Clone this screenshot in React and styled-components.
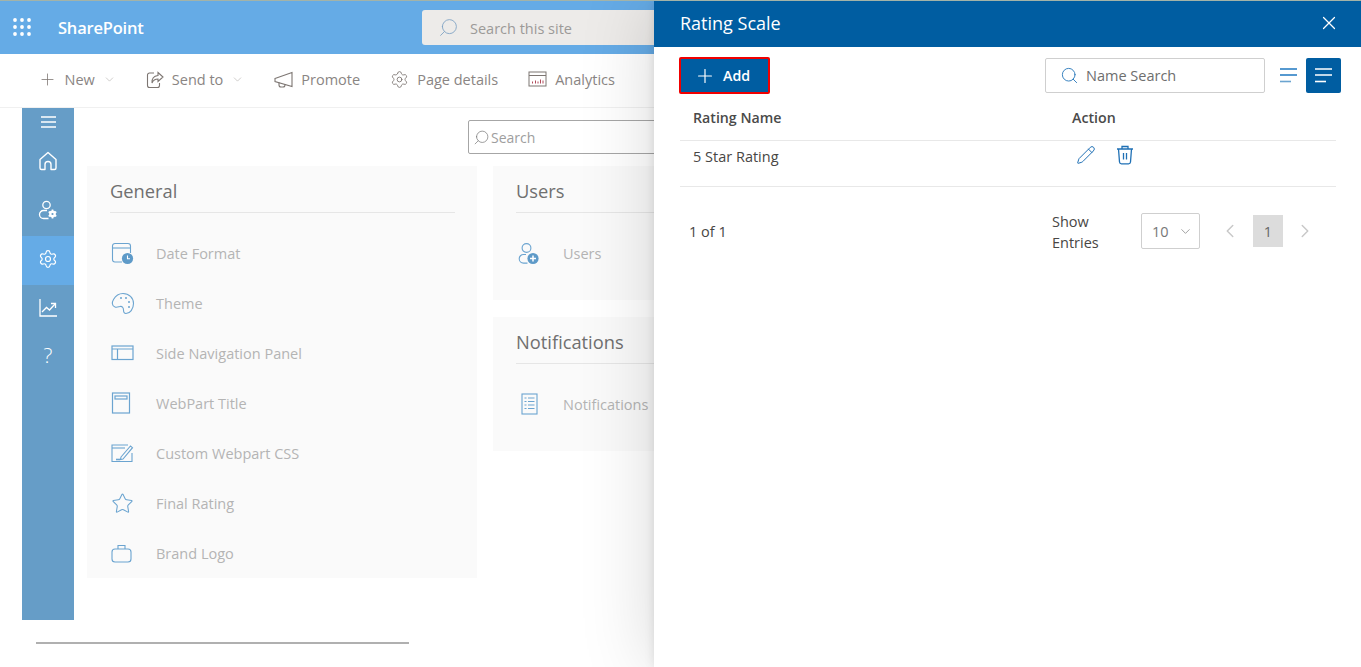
import React from "react";
import styled, { createGlobalStyle } from "styled-components";
import { Plus, ChevronDown, ChevronLeft, ChevronRight, Settings, Search, X, Pencil, Star } from "lucide-react";

const GlobalStyle = createGlobalStyle`
  html, body { margin: 0; padding: 0; }
  body { font-family: "Open Sans", "Noto Sans", "Liberation Sans", sans-serif; background: #fff; }
  * { box-sizing: border-box; }
`;

const commands = [
  { label: "New", icon: <Plus size={19} strokeWidth={1} />, caret: true },
  { label: "Send to", icon: <SendIcon />, caret: true },
  { label: "Promote", icon: <PromoteIcon /> },
  { label: "Page details", icon: <Settings size={19} strokeWidth={1.1} /> },
  { label: "Analytics", icon: <AnalyticsIcon /> },
];

const generalItems = [
  { label: "Date Format", icon: <DateIcon /> },
  { label: "Theme", icon: <PaletteIcon /> },
  { label: "Side Navigation Panel", icon: <SideNavIcon /> },
  { label: "WebPart Title", icon: <TitleIcon /> },
  { label: "Custom Webpart CSS", icon: <CssIcon /> },
  { label: "Final Rating", icon: <Star size={23} strokeWidth={1.1} /> },
  { label: "Brand Logo", icon: <CaseIcon /> },
];

function WaffleIcon() {
  const dots = [];
  for (let y = 0; y < 3; y++) {
    for (let x = 0; x < 3; x++) {
      dots.push(<circle key={x + "-" + y} cx={2 + x * 7} cy={2 + y * 7} r="1.9" fill="#fff" />);
    }
  }
  return <svg width="20" height="20" viewBox="0 0 20 20">{dots}</svg>;
}

function SendIcon() {
  return (
    <svg width="18" height="18" viewBox="0 0 18 18" fill="none" stroke="#7d7672" strokeWidth="1.1">
      <path d="M8 2H3.500A2 2 0 0 0 1.500 4v10.500a2 2 0 0 0 2 2h8a2 2 0 0 0 2-2V12" />
      <path d="M12 1.500l5 4.500-5 4.500V8C9 8 7 9.500 6 12c-.3-4 2-7 6-7.500z" />
    </svg>
  );
}

function PromoteIcon() {
  return (
    <svg width="19" height="18" viewBox="0 0 19 18" fill="none" stroke="#7d7672" strokeWidth="1.1">
      <path d="M1 7.500L18 1.500v14L1 10.500z" />
      <path d="M5 11.500v2.500a2 2 0 0 0 2 2h2a2 2 0 0 0 2-2v-.8" />
    </svg>
  );
}

function AnalyticsIcon() {
  return (
    <svg width="19" height="17" viewBox="0 0 19 17" fill="none" stroke="#7d7672">
      <rect x="1" y="1" width="17" height="14" />
      <path d="M1 4.500h17" />
      <path d="M4.500 12.500v-2M7.500 12.500v-3M10 12.500v-2M12.500 12.500v-4M15 12.500v-3" stroke="#b04a5a" />
    </svg>
  );
}

function HomeIcon() {
  return (
    <svg width="20" height="20" viewBox="0 0 20 20" fill="none" stroke="#fff" strokeWidth="1.4" strokeLinejoin="round">
      <path d="M2 8.500L10 1.500l8 7v8.500a1.500 1.500 0 0 1-1.500 1.500H13v-5a3 3 0 0 0-6 0v5H3.500A1.500 1.500 0 0 1 2 17z" />
    </svg>
  );
}

function ChartIcon() {
  return (
    <svg width="18" height="18" viewBox="0 0 18 18" fill="none" stroke="#fff" strokeWidth="1.3">
      <path d="M1 0v17h17" />
      <path d="M3 13l4.500-4.500 3 2.500L16 5" />
      <path d="M12 4.500h4.500V9" />
    </svg>
  );
}

function UserGearIcon() {
  return (
    <svg width="20" height="20" viewBox="0 0 20 20" fill="none" stroke="#fff" strokeWidth="1.3">
      <circle cx="8.500" cy="5" r="3.700" />
      <path d="M9 10.500H5.500a3.600 3.600 0 0 0 0 8h5" />
      <circle cx="14.500" cy="14" r="3.400" fill="#fff" stroke="none" />
      <path d="M14.500 9.600v8.800M10.700 11.800l7.600 4.400M18.300 11.800l-7.600 4.400" strokeWidth="1.700" />
      <circle cx="14.500" cy="14" r="1.100" fill="#669dc7" stroke="none" />
    </svg>
  );
}

function UserPlusIcon() {
  return (
    <svg width="23" height="23" viewBox="0 0 23 23" fill="none" stroke="#6ba4d0" strokeWidth="1.1">
      <circle cx="9.500" cy="6" r="4.400" />
      <path d="M9 12.500H6.500a4.300 4.300 0 0 0 0 8.600h4" />
      <circle cx="16" cy="16.500" r="5.600" fill="#5e9ac8" stroke="none" />
      <path d="M16 13.500v6M13 16.500h6" stroke="#fff" strokeWidth="1.500" />
    </svg>
  );
}

function DateIcon() {
  return (
    <svg width="23" height="23" viewBox="0 0 23 23" fill="none" stroke="#6ba4d0" strokeWidth="1.1">
      <path d="M11 20H4a2.500 2.500 0 0 1-2.500-2.500V4A2.500 2.500 0 0 1 4 1.500h13A2.500 2.500 0 0 1 19.500 4v7" />
      <path d="M1.500 6h18" />
      <circle cx="16.500" cy="16.500" r="5.600" fill="#5e9ac8" stroke="none" />
      <path d="M16.500 13.500v3.300h2.500" stroke="#fff" />
    </svg>
  );
}

function PaletteIcon() {
  return (
    <svg width="24" height="23" viewBox="0 0 24 23" fill="none" stroke="#6ba4d0" strokeWidth="1.1">
      <path d="M12 1.500c6 0 10.500 4.500 10.500 10s-3.500 10-7.500 10c-2 0-2.500-1.500-2.500-3.500 0-2.500-1.500-4-3.500-3.500-2 .5-3.500 1.200-5 .5C.500 14 1 10 2.500 7.500 4.500 4 8 1.500 12 1.500z" />
      <circle cx="10" cy="6" r="1" fill="#6ba4d0" stroke="none" />
      <circle cx="15" cy="6" r="1" fill="#6ba4d0" stroke="none" />
      <circle cx="18" cy="10" r="1" fill="#6ba4d0" stroke="none" />
      <circle cx="18" cy="15" r="1" fill="#6ba4d0" stroke="none" />
    </svg>
  );
}

function SideNavIcon() {
  return (
    <svg width="23" height="16" viewBox="0 0 23 16" fill="none" stroke="#6ba4d0" strokeWidth="1.200">
      <rect x="1" y="1" width="21" height="13.500" />
      <path d="M1 4h21M6.500 4v10.500" />
    </svg>
  );
}

function TitleIcon() {
  return (
    <svg width="20" height="22" viewBox="0 0 20 22" fill="none" stroke="#6ba4d0" strokeWidth="1.200">
      <rect x="1.500" y="1" width="17" height="20" />
      <rect x="4" y="4" width="12" height="3" />
    </svg>
  );
}

function CssIcon() {
  return (
    <svg width="23" height="19" viewBox="0 0 23 19" fill="none" stroke="#6ba4d0" strokeWidth="1.100">
      <path d="M17 1H1v16.500h20V9" />
      <path d="M1 4h13" />
      <path d="M10 13l9.500-11 2 1.700L12 15l-2.500.5z" />
      <path d="M5 15.500h4" strokeWidth="1.600" />
    </svg>
  );
}

function CaseIcon() {
  return (
    <svg width="21" height="19" viewBox="0 0 21 19" fill="none" stroke="#6ba4d0" strokeWidth="1.100">
      <rect x="1" y="5" width="19" height="13" rx="3" />
      <path d="M7 5V1.500h7V5" />
    </svg>
  );
}

function NoteIcon() {
  return (
    <svg width="23" height="22" viewBox="-4 0 23 22" fill="none" stroke="#6ba4d0" strokeWidth="1.100">
      <rect x="1" y="1" width="15" height="20" />
      <path d="M3.500 5h2M7 5h6.500M3.500 8.500h2M7 8.500h6.500M3.500 12h2M7 12h6.500M3.500 15.500h2M7 15.500h6.500" />
    </svg>
  );
}

function TrashIcon() {
  return (
    <svg width="18" height="20" viewBox="0 0 18 20" fill="none" stroke="#1f70b5" strokeWidth="1.300">
      <path d="M1 4h16M6 4V1.500h6V4" />
      <path d="M2.500 4l1 13a2 2 0 0 0 2 1.800h7a2 2 0 0 0 2-1.800l1-13" />
      <path d="M7.500 8v6.500M10.500 8v6.500" />
    </svg>
  );
}

function SortLines({ color, last }) {
  return (
    <svg width="19" height="17" viewBox="0 0 19 17" stroke={color} strokeWidth="1.400">
      <path d="M1 2h17M1 8h17" />
      <path d="M1 14.500h11" stroke={last || color} strokeWidth="1.600" />
    </svg>
  );
}

export default function App() {
  return (
    <Page>
      <GlobalStyle />
      <SuiteBar>
        <Waffle><WaffleIcon /></Waffle>
        <Brand>SharePoint</Brand>
        <SiteSearch>
          <Search size={21} strokeWidth={1} color="#7fa2c4" style={{ transform: "scaleX(-1)" }} />
          <span>Search this site</span>
        </SiteSearch>
      </SuiteBar>
      <CommandBar>
        {commands.map((c) => (
          <Command key={c.label}>
            {c.icon}
            <span>{c.label}</span>
            {c.caret && <ChevronDown size={13} strokeWidth={1} color="#a8a4a1" />}
          </Command>
        ))}
      </CommandBar>
      <Body>
        <SideNav>
          <NavItem $short>
            <svg width="15" height="12" viewBox="0 0 15 12" stroke="#fff" strokeWidth="1.400"><path d="M0 1h15M0 6h15M0 11h15" /></svg>
          </NavItem>
          <NavItem><HomeIcon /></NavItem>
          <NavItem><UserGearIcon /></NavItem>
          <NavItem $active><Settings size={20} strokeWidth={1.4} /></NavItem>
          <NavItem><ChartIcon /></NavItem>
          <NavItem><HelpText>?</HelpText></NavItem>
        </SideNav>
        <Main>
          <PageSearch>
            <Search size={17} strokeWidth={1} color="#777" style={{ transform: "scaleX(-1)" }} />
            <span>Search</span>
          </PageSearch>
          <Columns>
            <Card>
              <CardTitle>General</CardTitle>
              {generalItems.map((item) => (
                <Row key={item.label}>
                  <RowIcon>{item.icon}</RowIcon>
                  <span>{item.label}</span>
                </Row>
              ))}
            </Card>
            <SideCards>
              <Card $small>
                <CardTitle>Users</CardTitle>
                <Row>
                  <RowIcon $wide><UserPlusIcon /></RowIcon>
                  <span>Users</span>
                </Row>
              </Card>
              <Card $small>
                <CardTitle>Notifications</CardTitle>
                <Row>
                  <RowIcon $wide><NoteIcon /></RowIcon>
                  <span>Notifications</span>
                </Row>
              </Card>
            </SideCards>
          </Columns>
        </Main>
      </Body>
      <FootRule />

      <Panel>
        <PanelHeader>
          <PanelTitle>Rating Scale</PanelTitle>
          <X size={22} strokeWidth={1.3} color="#fff" />
        </PanelHeader>
        <Toolbar>
          <AddButton>
            <Plus size={22} strokeWidth={1.3} />
            <span>Add</span>
          </AddButton>
          <NameSearch>
            <Search size={19} strokeWidth={1.2} color="#2f7cbd" />
            <span>Name Search</span>
          </NameSearch>
          <ViewButton><SortLines color="#1f78c1" last="#6ba4d0" /></ViewButton>
          <ViewButton $active><SortLines color="#fff" /></ViewButton>
        </Toolbar>
        <TableHead>
          <span>Rating Name</span>
          <span>Action</span>
        </TableHead>
        <TableRow>
          <RatingName>5 Star Rating</RatingName>
          <Actions>
            <Pencil size={20} strokeWidth={1.2} color="#1f70b5" />
            <TrashIcon />
          </Actions>
        </TableRow>
        <Pager>
          <Count>1 of 1</Count>
          <ShowLabel>Show<br />Entries</ShowLabel>
          <EntrySelect>
            <span>10</span>
            <ChevronDown size={15} strokeWidth={1.1} color="#777" />
          </EntrySelect>
          <PageArrow><ChevronLeft size={22} strokeWidth={1.6} /></PageArrow>
          <PageNumber>1</PageNumber>
          <PageArrow><ChevronRight size={22} strokeWidth={1.6} /></PageArrow>
        </Pager>
      </Panel>
    </Page>
  );
}

const Page = styled.div`
  position: relative;
  width: 1361px;
  height: 667px;
  overflow: hidden;
  border-top: 1px solid #a3b3a8;
  background: #fff;
`;

const SuiteBar = styled.header`
  height: 53px;
  background: #65abe6;
  display: flex;
  align-items: center;
  color: #fff;
`;

const Waffle = styled.div`
  width: 58px;
  padding-left: 13px;
  display: flex;
`;

const Brand = styled.div`
  width: 364px;
  font-size: 16.5px;
  font-weight: 600;
  letter-spacing: -0.2px;
`;

const SiteSearch = styled.div`
  width: 520px;
  height: 35px;
  background: #edebe9;
  border-radius: 3px;
  display: flex;
  align-items: center;
  gap: 11px;
  padding-left: 16px;
  font-size: 14.5px;
  color: #9c9a98;
  span { padding-top: 2px; }
`;

const CommandBar = styled.nav`
  height: 54px;
  border-bottom: 1px solid #f0f0f0;
  padding: 0 0 2px 37.5px;
  display: flex;
  align-items: center;
  gap: 30px;
`;

const Command = styled.div`
  display: flex;
  align-items: center;
  gap: 8px;
  font-size: 14.5px;
  color: #8a8583;
  svg { color: #7d7672; flex-shrink: 0; }
`;

const Body = styled.div`
  display: flex;
  padding-left: 22px;
`;

const SideNav = styled.aside`
  width: 52px;
  height: 512px;
  background: #669dc7;
  display: flex;
  flex-direction: column;
  color: #fff;
`;

const NavItem = styled.div`
  height: ${(p) => (p.$short ? "30px" : "49px")};
  padding-bottom: ${(p) => (p.$short ? "2px" : "3px")};
  display: flex;
  align-items: center;
  justify-content: center;
  background: ${(p) => (p.$active ? "#65abe6" : "transparent")};
`;

const HelpText = styled.span`
  font-size: 21px;
  font-weight: 300;
  line-height: 1;
  margin-top: -3px;
`;

const Main = styled.main`
  flex: 1;
  padding: 12px 0 0 13px;
`;

const PageSearch = styled.div`
  margin-left: 381px;
  width: 520px;
  height: 34px;
  border: 1px solid #a6a6a6;
  border-radius: 2px;
  display: flex;
  align-items: center;
  gap: 1px;
  padding-left: 4px;
  font-size: 14px;
  color: #9e9e9e;
`;

const Columns = styled.div`
  margin-top: 12px;
  display: flex;
  gap: 16px;
`;

const SideCards = styled.div`
  width: 390px;
  display: flex;
  flex-direction: column;
  gap: 17px;
`;

const Card = styled.section`
  background: #fafafa;
  width: 390px;
  height: ${(p) => (p.$small ? "134px" : "412px")};
  padding: 8px 22px 0 23px;
`;

const CardTitle = styled.h2`
  margin: 0 0 15px;
  height: 39px;
  border-bottom: 1px solid #e6e6e6;
  font-size: 18.3px;
  font-weight: 400;
  line-height: 33px;
  color: #707070;
`;

const Row = styled.div`
  height: 50px;
  display: flex;
  align-items: center;
  font-size: 14.5px;
  color: #b4b4b4;
`;

const RowIcon = styled.div`
  width: ${(p) => (p.$wide ? "47px" : "46px")};
  padding-left: 1px;
  display: flex;
  color: #6ba4d0;
`;

const FootRule = styled.hr`
  margin: 22px 0 0 36px;
  width: 373px;
  height: 2px;
  border: none;
  background: #b0b0b0;
`;

const Panel = styled.aside`
  position: absolute;
  top: 0;
  right: 0;
  bottom: 0;
  width: 707px;
  background: #fff;
  box-shadow: 0 0 70px rgba(0, 0, 0, 0.16), 0 0 10px rgba(0, 0, 0, 0.1);
`;

const PanelHeader = styled.div`
  height: 46px;
  background: #005da1;
  padding: 0 21px 2px 26px;
  display: flex;
  align-items: center;
  justify-content: space-between;
  color: #fff;
`;

const PanelTitle = styled.h1`
  margin: 0;
  font-size: 18px;
  font-weight: 400;
`;

const Toolbar = styled.div`
  margin-top: 10px;
  padding: 0 20px 0 25px;
  display: flex;
  align-items: center;
  height: 37px;
`;

const AddButton = styled.button`
  width: 91px;
  height: 37px;
  border: 2px solid #f00000;
  border-radius: 2px;
  background: #005da1;
  color: #fff;
  font: inherit;
  font-size: 14.2px;
  font-weight: 600;
  display: flex;
  align-items: center;
  gap: 7px;
  padding: 0 0 0 13px;
  margin-right: auto;
`;

const NameSearch = styled.div`
  width: 220px;
  height: 35px;
  border: 1px solid #cfcfcf;
  border-radius: 2px;
  display: flex;
  align-items: center;
  gap: 7px;
  padding-left: 14px;
  font-size: 14.5px;
  color: #6e6e6e;
  margin-right: 6px;
`;

const ViewButton = styled.div`
  width: 35px;
  height: 35px;
  border-radius: 2px;
  background: ${(p) => (p.$active ? "#005da1" : "transparent")};
  display: flex;
  align-items: center;
  justify-content: center;
`;

const TableHead = styled.div`
  margin: 5px 25px 0 26px;
  height: 42px;
  padding: 0 0 4px 13px;
  display: grid;
  grid-template-columns: 379px 1fr;
  align-items: center;
  border-bottom: 1px solid #e8e8e8;
  font-size: 14.2px;
  font-weight: 600;
  color: #4a4a4a;
`;

const TableRow = styled.div`
  margin: 0 25px 0 26px;
  height: 46px;
  padding-left: 13px;
  display: grid;
  grid-template-columns: 379px 1fr;
  border-bottom: 1px solid #e8e8e8;
  font-size: 14.5px;
  color: #484644;
`;

const RatingName = styled.span`
  padding-top: 6px;
`;

const Actions = styled.div`
  display: flex;
  align-items: flex-start;
  gap: 20px;
  padding: 4px 0 0 4px;
`;

const Pager = styled.div`
  margin: 26px 0 0 35px;
  display: flex;
  align-items: center;
  height: 36px;
  font-size: 14.5px;
  color: #484644;
`;

const Count = styled.div`
  width: 363px;
`;

const ShowLabel = styled.div`
  width: 89px;
  line-height: 21px;
  padding-top: 2px;
  font-weight: 500;
`;

const EntrySelect = styled.div`
  width: 59px;
  height: 36px;
  border: 1px solid #cfcfcf;
  border-radius: 2px;
  display: flex;
  align-items: center;
  gap: 9px;
  padding-left: 10px;
  color: #777;
  margin-right: 19px;
`;

const PageArrow = styled.div`
  width: 22px;
  display: flex;
  justify-content: center;
  color: #c8c8c8;
`;

const PageNumber = styled.div`
  width: 30px;
  height: 32px;
  background: #dcdcdc;
  display: flex;
  align-items: center;
  justify-content: center;
  color: #666;
  margin: 0 11px 0 12px;
`;
